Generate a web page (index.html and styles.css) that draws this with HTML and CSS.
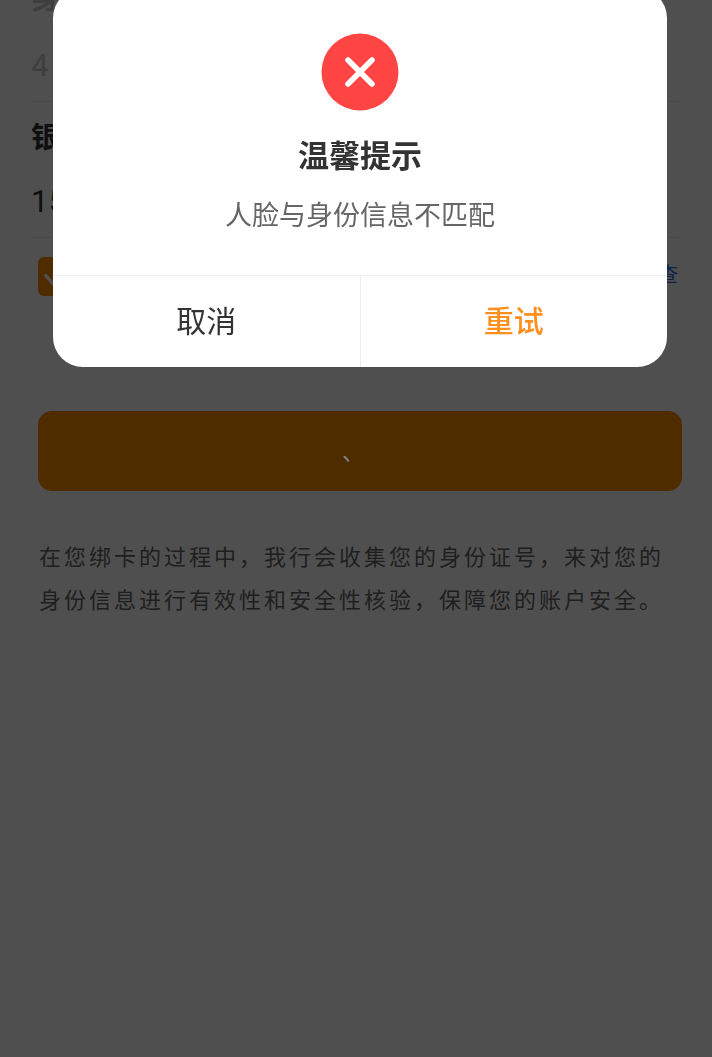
FILE: index.html
```html
<!DOCTYPE html>
<html lang="zh-CN">
  <head>
    <meta charset="UTF-8" />
    <meta name="viewport" content="width=device-width, initial-scale=1.0" />
    <title>绑定银行卡</title>
    <link rel="stylesheet" href="styles.css">
  </head>
  <body>
    <!-- 底层表单 -->
    <div class="page">
      <div class="field first">
        <div class="field-label faded">身份证号</div>
        <div class="field-value faded">4</div>
      </div>
      <div class="field">
        <div class="field-label">银行卡号</div>
        <div class="field-value">15</div>
      </div>
      <div class="agree">
        <span class="checkbox">
          <svg viewBox="0 0 40 40" width="39" height="39">
            <path d="M8 19 L17 29 L31 13" fill="none" stroke="#fff" stroke-width="3.5" stroke-linecap="round" stroke-linejoin="round" />
          </svg>
        </span>
        <span class="agree-link">查</span>
      </div>
      <button class="submit"><span class="submit-text">、</span></button>
      <p class="notice">
        在您绑卡的过程中，我行会收集您的身份证号，来对您的身份信息进行有效性和安全性核验，保障您的账户安全。
      </p>
    </div>

    <!-- 遮罩和弹窗 -->
    <div class="mask">
      <div class="dialog">
        <div class="dialog-body">
          <svg class="error-icon" viewBox="0 0 78 78" width="78" height="78">
            <circle cx="39" cy="39" r="38.5" fill="#ff4444" />
            <path d="M27 27 L51 51 M51 27 L27 51" fill="none" stroke="#fff" stroke-width="5.5" stroke-linecap="round" />
          </svg>
          <div class="dialog-title">温馨提示</div>
          <div class="dialog-text">人脸与身份信息不匹配</div>
        </div>
        <div class="dialog-actions">
          <div class="dialog-btn">取消</div>
          <div class="dialog-btn retry">重试</div>
        </div>
      </div>
    </div>
  </body>
</html>
```

FILE: styles.css
```css
html,
body {
  height: 100%;
}

body {
  font-family: Roboto, "Noto Sans CJK SC", sans-serif;
  margin: 0;
  padding: 0;
  overflow: hidden;
  background-color: white;
  color: #333;
}

.page {
  display: flex;
  flex-direction: column;
  margin-top: -23px;
}

.field {
  margin: 0 31px;
  padding-bottom: 13px;
  border-bottom: 1px solid #e8e8e8;
}

.field-label {
  font-size: 29px;
  font-weight: bold;
  line-height: 44px;
}

.field-value {
  margin-top: 20px;
  font-size: 31px;
  line-height: 44px;
}

.faded {
  color: #c8c8c8;
}

.first {
  margin-bottom: 14px;
}

.first .field-value {
  margin-top: 23px;
}

.agree {
  display: flex;
  justify-content: space-between;
  align-items: center;
  margin: 19px 34px 0 38px;
  height: 39px;
}

.checkbox {
  width: 39px;
  height: 39px;
  border-radius: 6px;
  background-color: #ff8f00;
}

.agree-link {
  font-size: 20px;
  color: #2f6fe8;
  margin-bottom: 6px;
}

.submit {
  display: block;
  margin: 115px 30px 0 38px;
  height: 80px;
  padding: 0 0 2px;
  border: none;
  border-radius: 14px;
  background-color: #ff8f00;
  font-family: inherit;
}

/* 这个小点在遮罩上面 */
.submit-text {
  position: relative;
  z-index: 2;
  color: #888;
  font-size: 22px;
  margin-right: 14px;
}

.notice {
  margin: 45px 48px 0 39px;
  font-size: 22px;
  line-height: 43px;
  letter-spacing: 3px;
  color: #666;
}

.mask {
  position: fixed;
  top: 0;
  left: 0;
  right: 0;
  bottom: 0;
  padding-left: 8px;
  background-color: rgba(0, 0, 0, 0.69);
  display: flex;
  justify-content: center;
  align-items: flex-start;
}

.dialog {
  width: 614px;
  margin-top: -12px;
  background-color: white;
  border-radius: 30px;
  overflow: hidden;
}

.dialog-body {
  display: flex;
  flex-direction: column;
  align-items: center;
  height: 287px;
  padding-top: 45px;
  box-sizing: border-box;
}

.error-icon {
  display: block;
}

.dialog-title {
  margin-top: 24px;
  font-size: 31px;
  font-weight: bold;
  line-height: 44px;
  color: #333;
}

.dialog-text {
  margin-top: 17px;
  font-size: 27px;
  line-height: 40px;
  color: #666;
}

.dialog-actions {
  display: flex;
  height: 92px;
  border-top: 1px solid #eee;
  box-sizing: border-box;
}

.dialog-btn {
  flex: 1;
  display: flex;
  justify-content: center;
  align-items: center;
  padding-bottom: 6px;
  font-size: 30px;
  color: #333;
}

.dialog-btn.retry {
  color: #ff8f1f;
  font-weight: 500;
  border-left: 1px solid #eee;
}
```
